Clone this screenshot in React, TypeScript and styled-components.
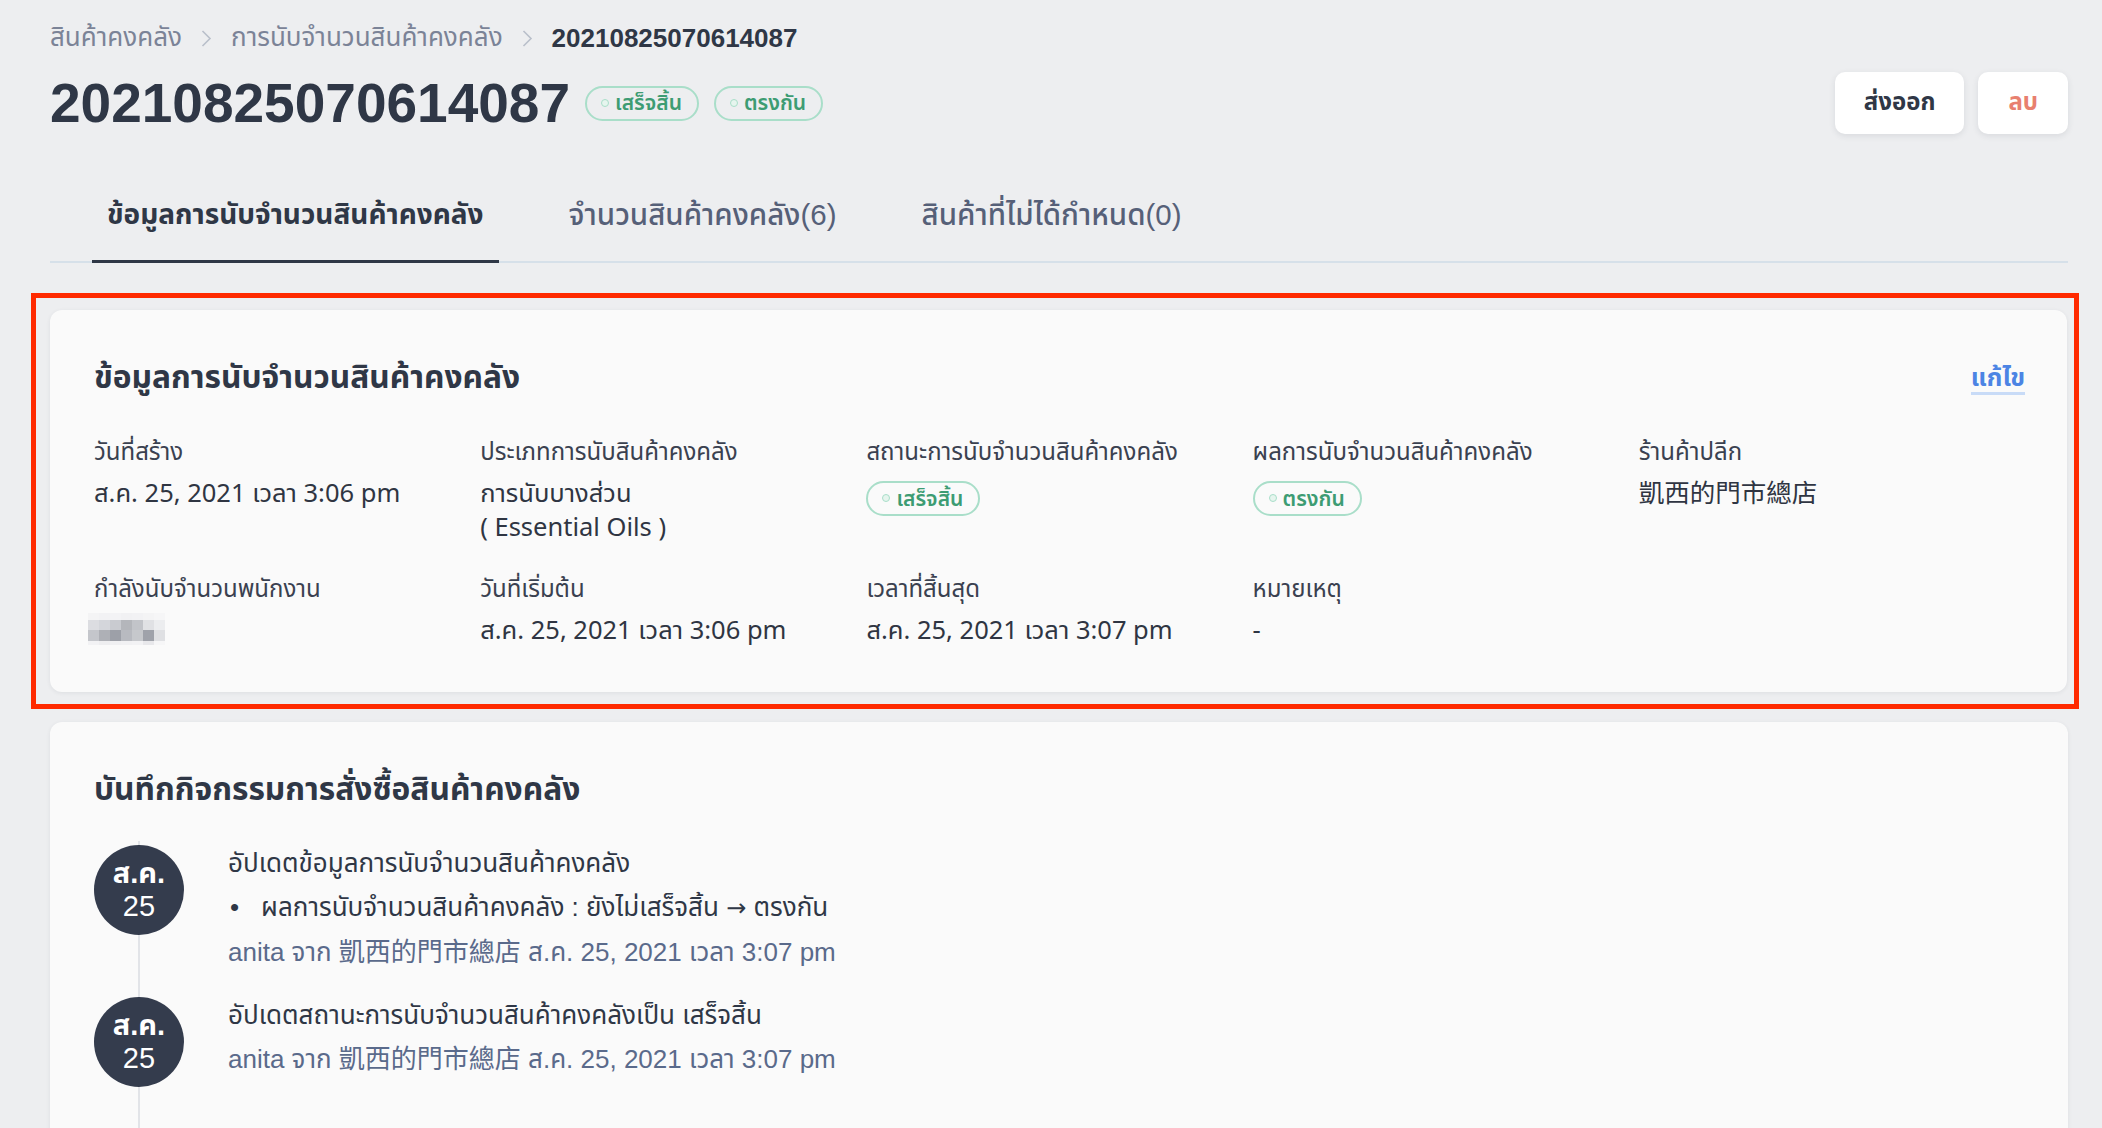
import React from "react";
import styled, { createGlobalStyle } from "styled-components";

const GlobalStyle = createGlobalStyle`
    html, body {
        margin: 0;
        padding: 0;
        background: #edeef0;
    }
    body {
        font-family: "Liberation Sans", "Noto Sans", "Noto Sans Thai", sans-serif;
        color: #2f3746;
    }
`;

const Page = styled.div`
    padding: 18px 34px 0 50px;
    height: 1128px;
    box-sizing: border-box;
    overflow: hidden;
`;

const Breadcrumbs = styled.div`
    display: flex;
    align-items: center;
    gap: 19px;
    height: 40px;
    font-size: 26px;
    color: #7b8397;
`;

const Crumb = styled.span<{ $current?: boolean }>`
    color: ${(p) => (p.$current ? "#2f3746" : "#7b8397")};
    font-weight: ${(p) => (p.$current ? 600 : 400)};
`;

const HeaderRow = styled.div`
    display: flex;
    align-items: center;
    justify-content: space-between;
    height: 90px;
`;

const TitleGroup = styled.div`
    display: flex;
    align-items: center;
    gap: 15px;
`;

const Title = styled.h1`
    margin: 0;
    font-size: 55px;
    font-weight: 700;
    color: #2f3746;
`;

const Badge = styled.span`
    display: inline-flex;
    align-items: center;
    gap: 6px;
    height: 35px;
    box-sizing: border-box;
    padding: 0 15px 0 14px;
    border: 2px solid #a9dec9;
    border-radius: 18px;
    font-size: 21px;
    font-weight: 600;
    color: #3d9c73;
    white-space: nowrap;
`;

const Dot = styled.span`
    width: 6px;
    height: 6px;
    border-radius: 50%;
    border: 1.5px solid #a9dec9;
    background: #e6f5ee;
`;

const Actions = styled.div`
    display: flex;
    gap: 14px;
`;

const Button = styled.button<{ $danger?: boolean }>`
    height: 62px;
    padding: 0 ${(p) => (p.$danger ? "30px" : "29px")};
    border: none;
    border-radius: 10px;
    background: #ffffff;
    box-shadow: 0 2px 6px rgba(40, 50, 70, 0.1);
    font-family: inherit;
    font-size: 24px;
    font-weight: 700;
    color: ${(p) => (p.$danger ? "#e8806f" : "#2f3746")};
`;

const Tabs = styled.div`
    display: flex;
    gap: 55px;
    margin-top: 20px;
    padding-left: 42px;
    border-bottom: 2px solid #d6e0e9;
`;

const Tab = styled.div<{ $active?: boolean }>`
    padding: 0 15px;
    height: 95px;
    display: flex;
    align-items: center;
    font-size: ${(p) => (p.$active ? "28px" : "29.5px")};
    font-weight: ${(p) => (p.$active ? 700 : 500)};
    color: ${(p) => (p.$active ? "#2f3746" : "#566078")};
    box-shadow: ${(p) => (p.$active ? "inset 0 -3px 0 #2f3746" : "none")};
    margin-bottom: -2px;
`;

const Highlight = styled.div`
    margin: 30px -11px 0 -19px;
    border: 5px solid #ff2a00;
    padding: 12px 7px 12px 14px;
`;

const Card = styled.section`
    background: #fafafa;
    border-radius: 12px;
    box-shadow: 0 1px 4px rgba(40, 50, 70, 0.08);
    padding: 48px 42px 46px 44px;
`;

const CardHead = styled.div`
    display: flex;
    align-items: center;
    justify-content: space-between;
    height: 40px;
`;

const CardTitle = styled.h2`
    margin: 0;
    font-size: 31.7px;
    font-weight: 700;
    color: #2f3746;
`;

const EditLink = styled.a`
    font-size: 25px;
    line-height: 30px;
    font-weight: 700;
    color: #4c84e4;
    text-decoration: none;
    border-bottom: 3px solid #c8dbf7;
`;

const Grid = styled.div`
    display: grid;
    grid-template-columns: repeat(5, 1fr);
    row-gap: 29px;
    margin-top: 37px;
`;

const Field = styled.div`
    display: flex;
    flex-direction: column;
    align-items: flex-start;
`;

const Label = styled.div`
    font-family: "Noto Sans", "Noto Sans Thai", sans-serif;
    font-size: 24px;
    line-height: 32px;
    color: #3a4150;
`;

const Value = styled.div`
    font-family: "Noto Sans", "Noto Sans Thai", "Noto Sans CJK TC", sans-serif;
    margin-top: 8px;
    font-size: 25.5px;
    line-height: 34px;
    color: #2f3542;
`;

const Blurred = styled.svg`
    display: block;
    margin: 9px 0 0 -6px;
`;

const LogCard = styled(Card)`
    margin-top: 13px;
    padding: 48px 44px 40px 44px;
`;

const Timeline = styled.div`
    margin-top: 31px;
`;

const Entry = styled.div`
    position: relative;
    display: flex;
    gap: 44px;
    padding-bottom: 19px;

    &::before {
        content: "";
        position: absolute;
        left: 44px;
        top: 0;
        bottom: -200px;
        width: 2px;
        background: #e2e4e8;
    }
`;

const DateBubble = styled.div`
    position: relative;
    flex: 0 0 90px;
    height: 90px;
    margin-top: 4px;
    border-radius: 50%;
    background: #343c4d;
    color: #ffffff;
    display: flex;
    flex-direction: column;
    align-items: center;
    justify-content: center;
    font-size: 29px;
    line-height: 33px;

    b {
        font-weight: 700;
    }
`;

const EntryBody = styled.div`
    font-size: 26px;
    line-height: 44px;
    color: #2f3746;
`;

const Change = styled.div`
    display: flex;
    gap: 22px;
    padding-left: 2px;
`;

const Arrow = styled.span`
    font-family: "DejaVu Sans", sans-serif;
    font-size: 24px;
`;

const Meta = styled.div`
    font-family: "Liberation Sans", "Noto Sans Thai", "Noto Sans CJK TC", sans-serif;
    font-size: 26px;
    color: #5a6a8b;
`;

const Chevron = () => (
    <svg width="11" height="17" viewBox="0 0 11 17">
        <polyline points="1.5,1 9,8.5 1.5,16" fill="none" stroke="#b9bfca" strokeWidth="1.6" />
    </svg>
);

const pixels = [
    ["#f4f4f5", "#f2f2f4", "#f3f3f5", "#f1f1f3", "#f2f2f4", "#f4f4f5", "#f6f6f7"],
    ["#dcdde1", "#d4d6db", "#c9cbd0", "#b4b6bb", "#c2c4c9", "#e0e1e4", "#ecedef"],
    ["#c4c6cb", "#aeb0b6", "#9da0a8", "#b8bac0", "#c6c8cc", "#9fa2aa", "#dfe0e3"],
    ["#f2f2f4", "#eeeef0", "#f0f0f2", "#f1f1f3", "#f2f2f4", "#e8e8eb", "#f6f6f7"],
];

const fields = [
    { label: "วันที่สร้าง", value: "ส.ค. 25, 2021 เวลา 3:06 pm" },
    { label: "ประเภทการนับสินค้าคงคลัง", value: "การนับบางส่วน", extra: "( Essential Oils )" },
    { label: "สถานะการนับจำนวนสินค้าคงคลัง", badge: "เสร็จสิ้น" },
    { label: "ผลการนับจำนวนสินค้าคงคลัง", badge: "ตรงกัน" },
    { label: "ร้านค้าปลีก", value: "凱西的門市總店" },
    { label: "กำลังนับจำนวนพนักงาน", blurred: true },
    { label: "วันที่เริ่มต้น", value: "ส.ค. 25, 2021 เวลา 3:06 pm" },
    { label: "เวลาที่สิ้นสุด", value: "ส.ค. 25, 2021 เวลา 3:07 pm" },
    { label: "หมายเหตุ", value: "-" },
];

export default function App() {
    return (
        <>
            <GlobalStyle />
            <Page>
                <Breadcrumbs>
                    <Crumb>สินค้าคงคลัง</Crumb>
                    <Chevron />
                    <Crumb>การนับจำนวนสินค้าคงคลัง</Crumb>
                    <Chevron />
                    <Crumb $current>20210825070614087</Crumb>
                </Breadcrumbs>

                <HeaderRow>
                    <TitleGroup>
                        <Title>20210825070614087</Title>
                        <Badge><Dot />เสร็จสิ้น</Badge>
                        <Badge><Dot />ตรงกัน</Badge>
                    </TitleGroup>
                    <Actions>
                        <Button>ส่งออก</Button>
                        <Button $danger>ลบ</Button>
                    </Actions>
                </HeaderRow>

                <Tabs>
                    <Tab $active>ข้อมูลการนับจำนวนสินค้าคงคลัง</Tab>
                    <Tab>จำนวนสินค้าคงคลัง(6)</Tab>
                    <Tab>สินค้าที่ไม่ได้กำหนด(0)</Tab>
                </Tabs>

                <Highlight>
                    <Card>
                        <CardHead>
                            <CardTitle>ข้อมูลการนับจำนวนสินค้าคงคลัง</CardTitle>
                            <EditLink href="#">แก้ไข</EditLink>
                        </CardHead>
                        <Grid>
                            {fields.map((f, i) => (
                                <Field key={i}>
                                    <Label>{f.label}</Label>
                                    {f.value && (
                                        <Value>
                                            {f.value}
                                            {f.extra && <div>{f.extra}</div>}
                                        </Value>
                                    )}
                                    {f.badge && (
                                        <Value>
                                            <Badge><Dot />{f.badge}</Badge>
                                        </Value>
                                    )}
                                    {f.blurred && (
                                        <Blurred width="77" height="32" viewBox="0 0 77 32">
                                            {pixels.map((row, r) =>
                                                row.map((c, k) => (
                                                    <rect key={`${r}-${k}`} x={k * 11} y={[0, 7, 17, 28][r]} width="11" height={[7, 10, 11, 4][r]} fill={c} />
                                                ))
                                            )}
                                        </Blurred>
                                    )}
                                </Field>
                            ))}
                        </Grid>
                    </Card>
                </Highlight>

                <LogCard>
                    <CardHead>
                        <CardTitle>บันทึกกิจกรรมการสั่งซื้อสินค้าคงคลัง</CardTitle>
                    </CardHead>
                    <Timeline>
                        <Entry>
                            <DateBubble><b>ส.ค.</b><span>25</span></DateBubble>
                            <EntryBody>
                                <div>อัปเดตข้อมูลการนับจำนวนสินค้าคงคลัง</div>
                                <Change>
                                    <span>•</span>
                                    <span>ผลการนับจำนวนสินค้าคงคลัง : ยังไม่เสร็จสิ้น <Arrow>→</Arrow> ตรงกัน</span>
                                </Change>
                                <Meta>anita จาก 凱西的門市總店 ส.ค. 25, 2021 เวลา 3:07 pm</Meta>
                            </EntryBody>
                        </Entry>
                        <Entry>
                            <DateBubble><b>ส.ค.</b><span>25</span></DateBubble>
                            <EntryBody>
                                <div>อัปเดตสถานะการนับจำนวนสินค้าคงคลังเป็น เสร็จสิ้น</div>
                                <Meta>anita จาก 凱西的門市總店 ส.ค. 25, 2021 เวลา 3:07 pm</Meta>
                            </EntryBody>
                        </Entry>
                    </Timeline>
                </LogCard>
            </Page>
        </>
    );
}
